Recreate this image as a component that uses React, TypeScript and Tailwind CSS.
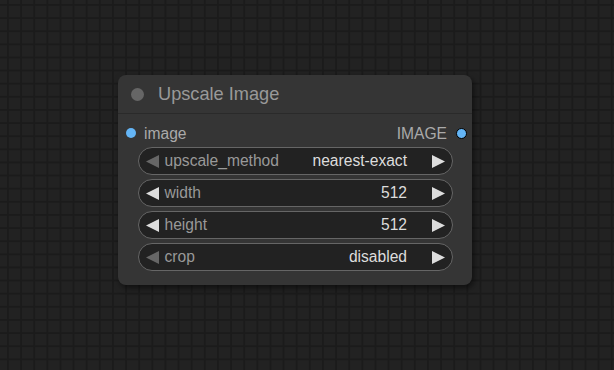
import React from 'react';

type Widget = {
  label: string;
  value: string;
  canDecrease: boolean;
};

const widgets: Widget[] = [
  { label: 'upscale_method', value: 'nearest-exact', canDecrease: false },
  { label: 'width', value: '512', canDecrease: true },
  { label: 'height', value: '512', canDecrease: true },
  { label: 'crop', value: 'disabled', canDecrease: false },
];

function Arrow({ dir, dim }: { dir: 'left' | 'right'; dim?: boolean }) {
  const points = dir === 'left' ? '13,0 0,6.5 13,13' : '0,0 13,6.5 0,13';
  return (
    <svg width="13" height="13" viewBox="0 0 13 13" className="shrink-0">
      <polygon points={points} fill={dim ? '#666' : '#ddd'} />
    </svg>
  );
}

function WidgetRow({ w }: { w: Widget }) {
  return (
    <div className="h-[28px] rounded-full border border-[#666] bg-[#222] flex items-center pl-[7px] pr-[7px]">
      <Arrow dir="left" dim={!w.canDecrease} />
      <span className="ml-[6px] text-[15.6px] text-[#999]">{w.label}</span>
      <span className="ml-auto mr-[25px] text-[15.6px] text-[#ddd]">{w.value}</span>
      <Arrow dir="right" />
    </div>
  );
}

export default function App() {
  return (
    <div
      className="relative w-[614px] h-[370px] overflow-hidden bg-[#222] bg-[linear-gradient(to_right,#1b1b1b_2px,transparent_2px),linear-gradient(to_bottom,#1b1b1b_2px,transparent_2px)] bg-[size:13.13px_13.13px] bg-[position:7px_4px]"
      style={{ fontFamily: '"Liberation Sans", Arial, sans-serif' }}
    >
      {/* node on the canvas */}
      <div className="absolute left-[118px] top-[75px] w-[354px] rounded-[8px] bg-[#353535] shadow-[2px_3px_6px_rgba(0,0,0,0.55)]">
        {/* title bar */}
        <div className="h-[39px] flex items-center border-b border-[#2a2a2a]">
          <div className="ml-[13px] w-[13px] h-[13px] rounded-full bg-[#666]" />
          <span className="ml-[14px] text-[18.2px] text-[#999] leading-none">Upscale Image</span>
        </div>

        {/* slots */}
        <div className="h-[33px] pt-[6px] flex items-center justify-between">
          <div className="flex items-center">
            <div className="ml-[8px] w-[10px] h-[10px] rounded-full bg-[#64b5f6]" />
            <span className="ml-[8px] text-[15.6px] text-[#aaa]">image</span>
          </div>
          <div className="flex items-center">
            <span className="mr-[9px] text-[15.6px] text-[#aaa]">IMAGE</span>
            <div className="mr-[5px] w-[11px] h-[11px] rounded-full bg-[#64b5f6] border border-black" />
          </div>
        </div>

        {/* widgets */}
        <div className="flex flex-col gap-1 pl-[19.5px] pr-[19px] pb-[14px]">
          {widgets.map((w) => (
            <WidgetRow key={w.label} w={w} />
          ))}
        </div>
      </div>
    </div>
  );
}
